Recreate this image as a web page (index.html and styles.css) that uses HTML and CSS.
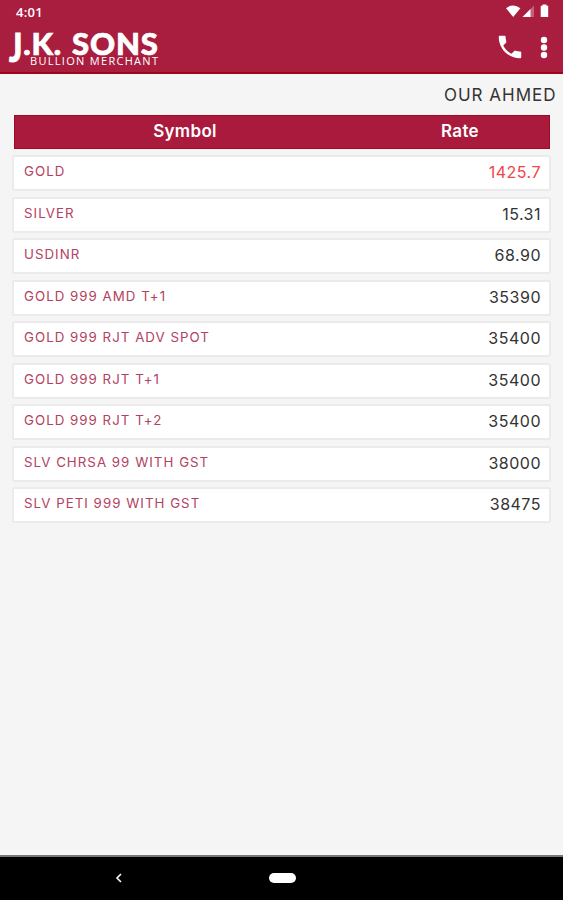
FILE: index.html
```html
<!DOCTYPE html>
<html lang="en">
<head>
<meta charset="utf-8">
<title>J.K. Sons</title>
<link rel="stylesheet" href="styles.css">
</head>
<body>
<div class="screen">
  <header class="top">
    <div class="status">
      <span class="clock">4:01</span>
      <svg class="status-icons" width="46" height="16" viewBox="0 0 46 16">
        <path d="M0 4.2Q7.2-1.4 14.400 4.2L7.200 13Z" fill="#fff"/>
        <path d="M28 1.500V13H16.500Z" fill="#c4607c"/>
        <path d="M24.500 5V13H16.500Z" fill="#fff"/>
        <path d="M36.500 .5h4v1.200h1.700v11.300h-7.500V1.700h1.800Z" fill="#fff"/>
      </svg>
    </div>
    <div class="bar">
      <div class="logo"><span class="logo-name"><span class="tall">J</span>.K. SONS</span><span class="logo-sub">BULLION MERCHANT</span></div>
      <div class="actions">
        <svg class="phone" width="30" height="30" viewBox="0 0 24 24"><path fill="#fff" d="M6.620 10.790c1.440 2.830 3.760 5.140 6.590 6.590l2.200-2.200c.27-.27.67-.36 1.020-.24 1.120.37 2.330.57 3.570.57.55 0 1 .45 1 1V20c0 .55-.45 1-1 1C10.610 21 3 13.390 3 4c0-.55.45-1 1-1h3.500c.55 0 1 .45 1 1 0 1.250.2 2.450.57 3.570.11.35.03.74-.25 1.020z"/></svg>
        <svg class="more" width="8" height="24" viewBox="0 0 8 24"><g fill="#fff"><circle cx="4" cy="4" r="3.200"/><circle cx="4" cy="11.500" r="3.200"/><circle cx="4" cy="19" r="3.200"/></g></svg>
      </div>
    </div>
  </header>
  <div class="ticker">OUR AHMED</div>
  <main class="rates">
    <div class="head"><span class="head-symbol">Symbol</span><span class="head-rate">Rate</span></div>
    <div class="row"><span class="name">GOLD</span><span class="rate down">1425.7</span></div>
    <div class="row"><span class="name">SILVER</span><span class="rate">15.31</span></div>
    <div class="row"><span class="name">USDINR</span><span class="rate">68.90</span></div>
    <div class="row"><span class="name">GOLD 999 AMD T+1</span><span class="rate">35390</span></div>
    <div class="row"><span class="name">GOLD 999 RJT ADV SPOT</span><span class="rate">35400</span></div>
    <div class="row"><span class="name">GOLD 999 RJT T+1</span><span class="rate">35400</span></div>
    <div class="row"><span class="name">GOLD 999 RJT T+2</span><span class="rate">35400</span></div>
    <div class="row"><span class="name">SLV CHRSA 99 WITH GST</span><span class="rate">38000</span></div>
    <div class="row"><span class="name">SLV PETI 999 WITH GST</span><span class="rate">38475</span></div>
  </main>
  <nav class="nav">
    <svg class="back" width="8" height="12" viewBox="0 0 8 12"><path d="M6 2L2 6l4 4" fill="none" stroke="#fff" stroke-width="1.600"/></svg>
    <span class="home"></span>
  </nav>
</div>
</body>
</html>
```

FILE: styles.css
```css
* { box-sizing: border-box; }
body { margin: 0; background: #f5f5f5; font-family: Inter, "Liberation Sans", sans-serif; }
.screen { width: 563px; height: 900px; display: flex; flex-direction: column; overflow: hidden; }
.top { height: 74px; flex: none; background: #a91e3f; border-bottom: 2px solid #9c0718; color: #fff; }
.status { height: 24px; display: flex; justify-content: space-between; padding: 4px 11px 0 16px; }
.clock { font: 600 13px/16px "Open Sans", sans-serif; letter-spacing: .3px; }
.bar { height: 48px; display: flex; justify-content: space-between; padding: 0 15px 0 9px; }
.logo { display: flex; flex-direction: column; white-space: nowrap; }
.logo-name { font: 900 31px/30px Lato, sans-serif; margin-top: 4px; letter-spacing: .800px; word-spacing: 2px; -webkit-text-stroke: .7px #fff; }
.tall { display: inline-block; transform: scaleY(1.300); transform-origin: 50% 4px; }
.logo-sub { font: 500 11px/12px "Open Sans", sans-serif; margin: -3px 0 0 21px; letter-spacing: 1.300px; }
.actions { display: flex; gap: 15.500px; padding-top: 8px; }
.more { margin-top: 4px; }
.ticker { height: 41px; flex: none; padding: 10px 6.500px 0 0; text-align: right; font-size: 17px; line-height: 22px; letter-spacing: 1px; color: #333; }
.rates { flex: 1; padding: 0 12px; }
.head { height: 34px; margin: 0 1px 6px 2px; display: flex; align-items: center; background: #a91a3c; border: 1px solid #a10a22; color: #fff; font-weight: 600; font-size: 17px; line-height: 30px; padding-bottom: 2px; letter-spacing: .3px; }
.head-symbol { width: 340px; text-align: center; }
.head-rate { flex: 1; text-align: center; padding-left: 16px; }
.row { height: 36px; margin-bottom: 5.500px; display: flex; justify-content: space-between; background: #fff; border: 2px solid #ebebeb; border-radius: 2px; padding: 0 8px 0 10px; }
.name { font-size: 13.300px; line-height: 29px; letter-spacing: 1.020px; color: #b34260; }
.rate { font-size: 16px; line-height: 31px; letter-spacing: .5px; color: #333; }
.down { color: #f04448; }
.nav { height: 45px; flex: none; background: #000; border-top: 2px solid #777; display: flex; align-items: center; padding: 0 0 1px 115px; }
.home { width: 27px; height: 10px; border-radius: 5px; background: #fff; margin-left: 146px; }
```
